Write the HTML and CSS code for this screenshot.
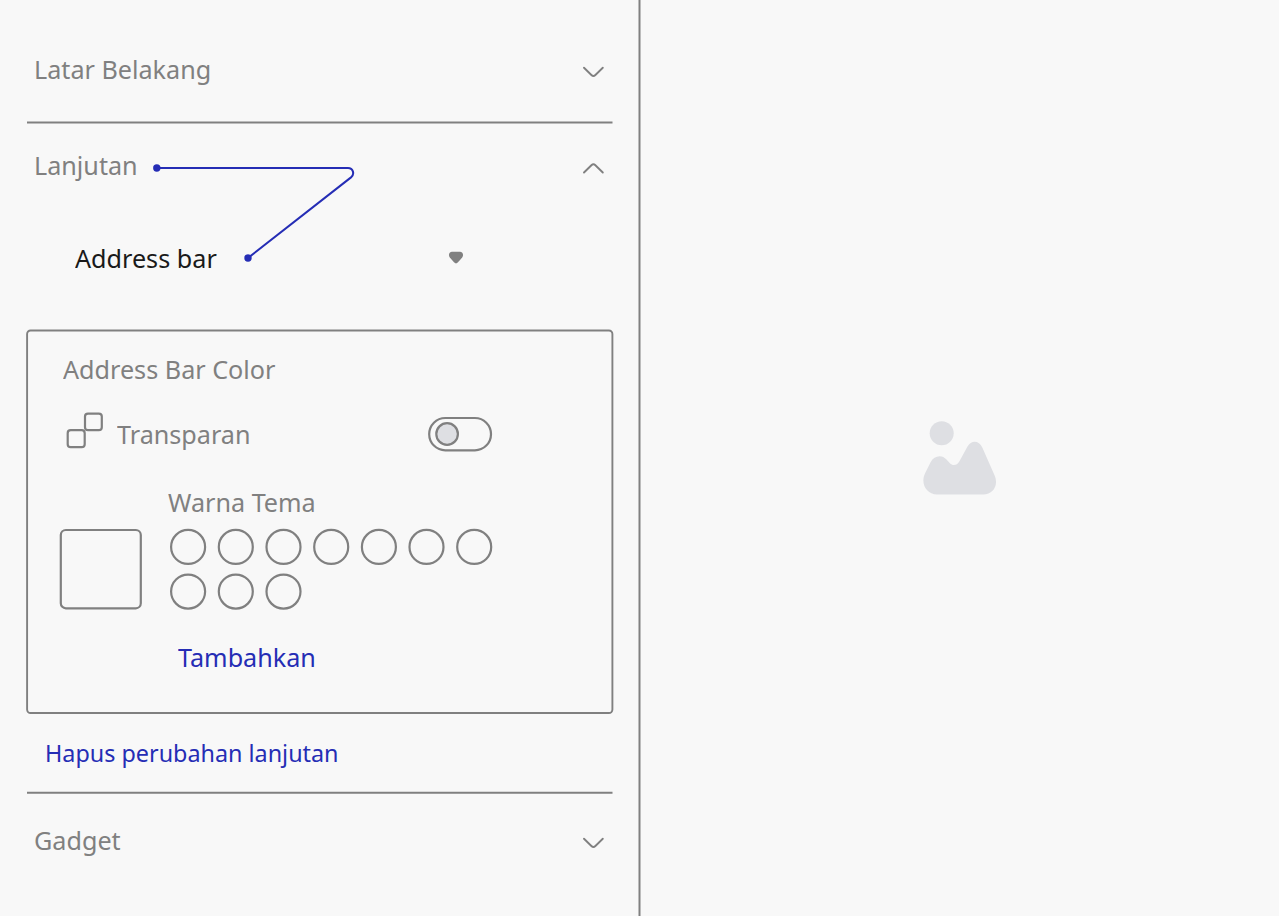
FILE: index.html
```
<!DOCTYPE html>
<html lang="id">
<head>
<meta charset="utf-8">
<title>Lanjutan</title>
<link rel="stylesheet" href="styles.css">
</head>
<body>
<main class="editor">
  <section class="panel">
    <header class="row row-background">
      <span class="label t-latar">Latar Belakang</span>
      <svg class="chevron" width="24" height="14" viewBox="0 0 24 14"><path d="M3 2.7 L10.4 10 Q12.4 11.9 14.4 10 L21.8 2.7"/></svg>
    </header>
    <svg class="divider" width="586" height="3"><path d="M0 1.5H585.5"/></svg>
    <header class="row row-advanced">
      <span class="label t-lanjutan">Lanjutan</span>
      <svg class="chevron" width="24" height="14" viewBox="0 0 24 14"><path d="M3 11.5 L10.4 4.2 Q12.4 2.3 14.4 4.2 L21.8 11.5"/></svg>
    </header>
    <div class="select">
      <span class="label dark t-select">Address bar</span>
      <svg class="caret" width="16" height="14" viewBox="0 0 16 14"><path d="M4 .8H12C14.8 .8 16 4.2 14.2 6.4L10 11.3Q8 13.6 6 11.3L1.8 6.4C0 4.2 1.2 .8 4 .8Z"/></svg>
    </div>
    <div class="card">
      <svg class="frame" width="588" height="386"><rect x="1.1" y="1.5" width="585.3" height="382.5" rx="3.5"/></svg>
      <span class="label t-color">Address Bar Color</span>
      <div class="transparent">
        <svg class="line-icon squares" width="38" height="38" viewBox="0 0 38 38"><rect x="20" y="2.6" width="16.8" height="16.6" rx="3"/><rect x="2.7" y="19.2" width="17" height="17" rx="3"/></svg>
        <span class="label t-transparent">Transparan</span>
        <svg class="line-icon toggle" width="66" height="36" viewBox="0 0 66 36"><rect x="2.2" y="2" width="61.8" height="32.3" rx="16.1"/><circle class="knob" cx="20.1" cy="18" r="10.8"/></svg>
      </div>
      <div class="theme">
        <svg class="line-icon preview" width="84" height="82" viewBox="0 0 84 82"><rect x="1.8" y="2" width="80" height="78.3" rx="5"/></svg>
        <div class="theme-colors">
          <span class="label t-theme">Warna Tema</span>
          <svg class="line-icon swatches" width="326" height="84" viewBox="0 0 326 84">
            <circle cx="19.1" cy="18.9" r="17"/><circle cx="66.8" cy="18.9" r="17"/><circle cx="114.5" cy="18.9" r="17"/><circle cx="162.2" cy="18.9" r="17"/><circle cx="209.9" cy="18.9" r="17"/><circle cx="257.5" cy="18.9" r="17"/><circle cx="305.2" cy="18.9" r="17"/>
            <circle cx="19.1" cy="63.6" r="17"/><circle cx="66.8" cy="63.6" r="17"/><circle cx="114.5" cy="63.6" r="17"/>
          </svg>
          <span class="label link t-add">Tambahkan</span>
        </div>
      </div>
    </div>
    <div class="reset"><span class="label link t-reset">Hapus perubahan lanjutan</span></div>
    <svg class="divider" width="586" height="3"><path d="M0 1.8H585.5"/></svg>
    <header class="row row-gadget">
      <span class="label t-gadget">Gadget</span>
      <svg class="chevron" width="24" height="14" viewBox="0 0 24 14"><path d="M3 2.7 L10.4 10 Q12.4 11.9 14.4 10 L21.8 2.7"/></svg>
    </header>
    <svg class="connector" width="206" height="104" viewBox="150 160 206 104"><path d="M156.8 168H348C353 168 355 174 351 177.4L248 258"/><circle cx="156.8" cy="168" r="3.7"/><circle cx="248" cy="258" r="3.7"/></svg>
  </section>
  <svg class="separator" width="3" height="916"><path d="M1.5 0V916"/></svg>
  <section class="canvas">
    <svg class="picture" width="76" height="76" viewBox="0 0 76 76"><circle cx="20.7" cy="13.3" r="12"/><path d="M4.2 53L9.7 42C13 35.5 21 34 25.5 39.5L28.7 43C31.8 46.3 36 45.5 38.3 41.5L46.5 26.5C50 20 58 20 61.3 27.5L73.2 54.5C78 64.5 73 74.5 62 74.5H16C5.5 74.5-1 63.5 4.2 53Z"/></svg>
  </section>
</main>
</body>
</html>
```
FILE: styles.css
```
body {
  margin: 0;
  background: #f8f8f8;
  font-family: "Noto Sans", sans-serif;
}
svg { display: block; flex: none; }
.editor {
  display: flex;
  height: 916px;
  overflow: hidden;
}
.panel {
  position: relative;
  box-sizing: border-box;
  width: 638px;
  flex: none;
  padding-left: 27px;
}
.label {
  display: block;
  font-size: 26px;
  line-height: 36px;
  color: #808080;
  white-space: nowrap;
  transform: scaleX(.968);
  transform-origin: left;
}
.dark { color: #1a1a1a; }
.link { color: #252db5; }
.row {
  box-sizing: border-box;
  display: flex;
  justify-content: space-between;
  width: 578px;
  padding-left: 7px;
}
.row-background { height: 121px; padding-top: 51px; }
.row-advanced { height: 116px; padding-top: 23px; }
.row-gadget { padding-top: 28px; }
.chevron { margin-top: 14px; }
.chevron path, .divider path, .separator path, .line-icon, .frame rect {
  fill: none;
  stroke: #808080;
  stroke-width: 2;
}
.frame rect { stroke-width: 1.9; }
.line-icon { stroke-width: 2.2; }
.line-icon .knob { fill: #dedfe3; }
.chevron path { stroke-width: 1.9; stroke-linecap: round; }
.select {
  display: flex;
  justify-content: space-between;
  width: 389px;
  height: 89px;
  padding-left: 48px;
}
.caret { margin-top: 11px; fill: #808080; }
.card {
  position: relative;
  box-sizing: border-box;
  width: 586px;
  height: 385px;
  padding: 22px 0 0 36px;
}
.frame { position: absolute; left: -1px; top: 0; }
.transparent {
  box-sizing: border-box;
  display: flex;
  height: 97px;
  padding-top: 24px;
}
.squares { margin-left: 2px; }
.transparent .label { width: 310px; margin: 5px 0 0 14px; }
.toggle { margin-top: 5px; }
.theme { display: flex; }
.preview { margin: 44px 0 0 -4px; }
.theme-colors { padding-left: 25px; }
.swatches { margin: 8px 0 27px 1px; }
.t-add { margin-left: 10px; }
.reset { box-sizing: border-box; height: 77px; padding: 21px 0 0 18px; }
.t-reset { font-size: 24px; transform: scaleX(.973); }
.connector {
  position: absolute;
  left: 150px;
  top: 160px;
}
.connector path { fill: none; stroke: #252db5; stroke-width: 2; }
.connector circle { fill: #252db5; }
.canvas {
  box-sizing: border-box;
  flex: 1;
  display: flex;
  align-items: center;
  justify-content: center;
  padding-right: 3px;
}
.picture { fill: #dedfe3; }
```
